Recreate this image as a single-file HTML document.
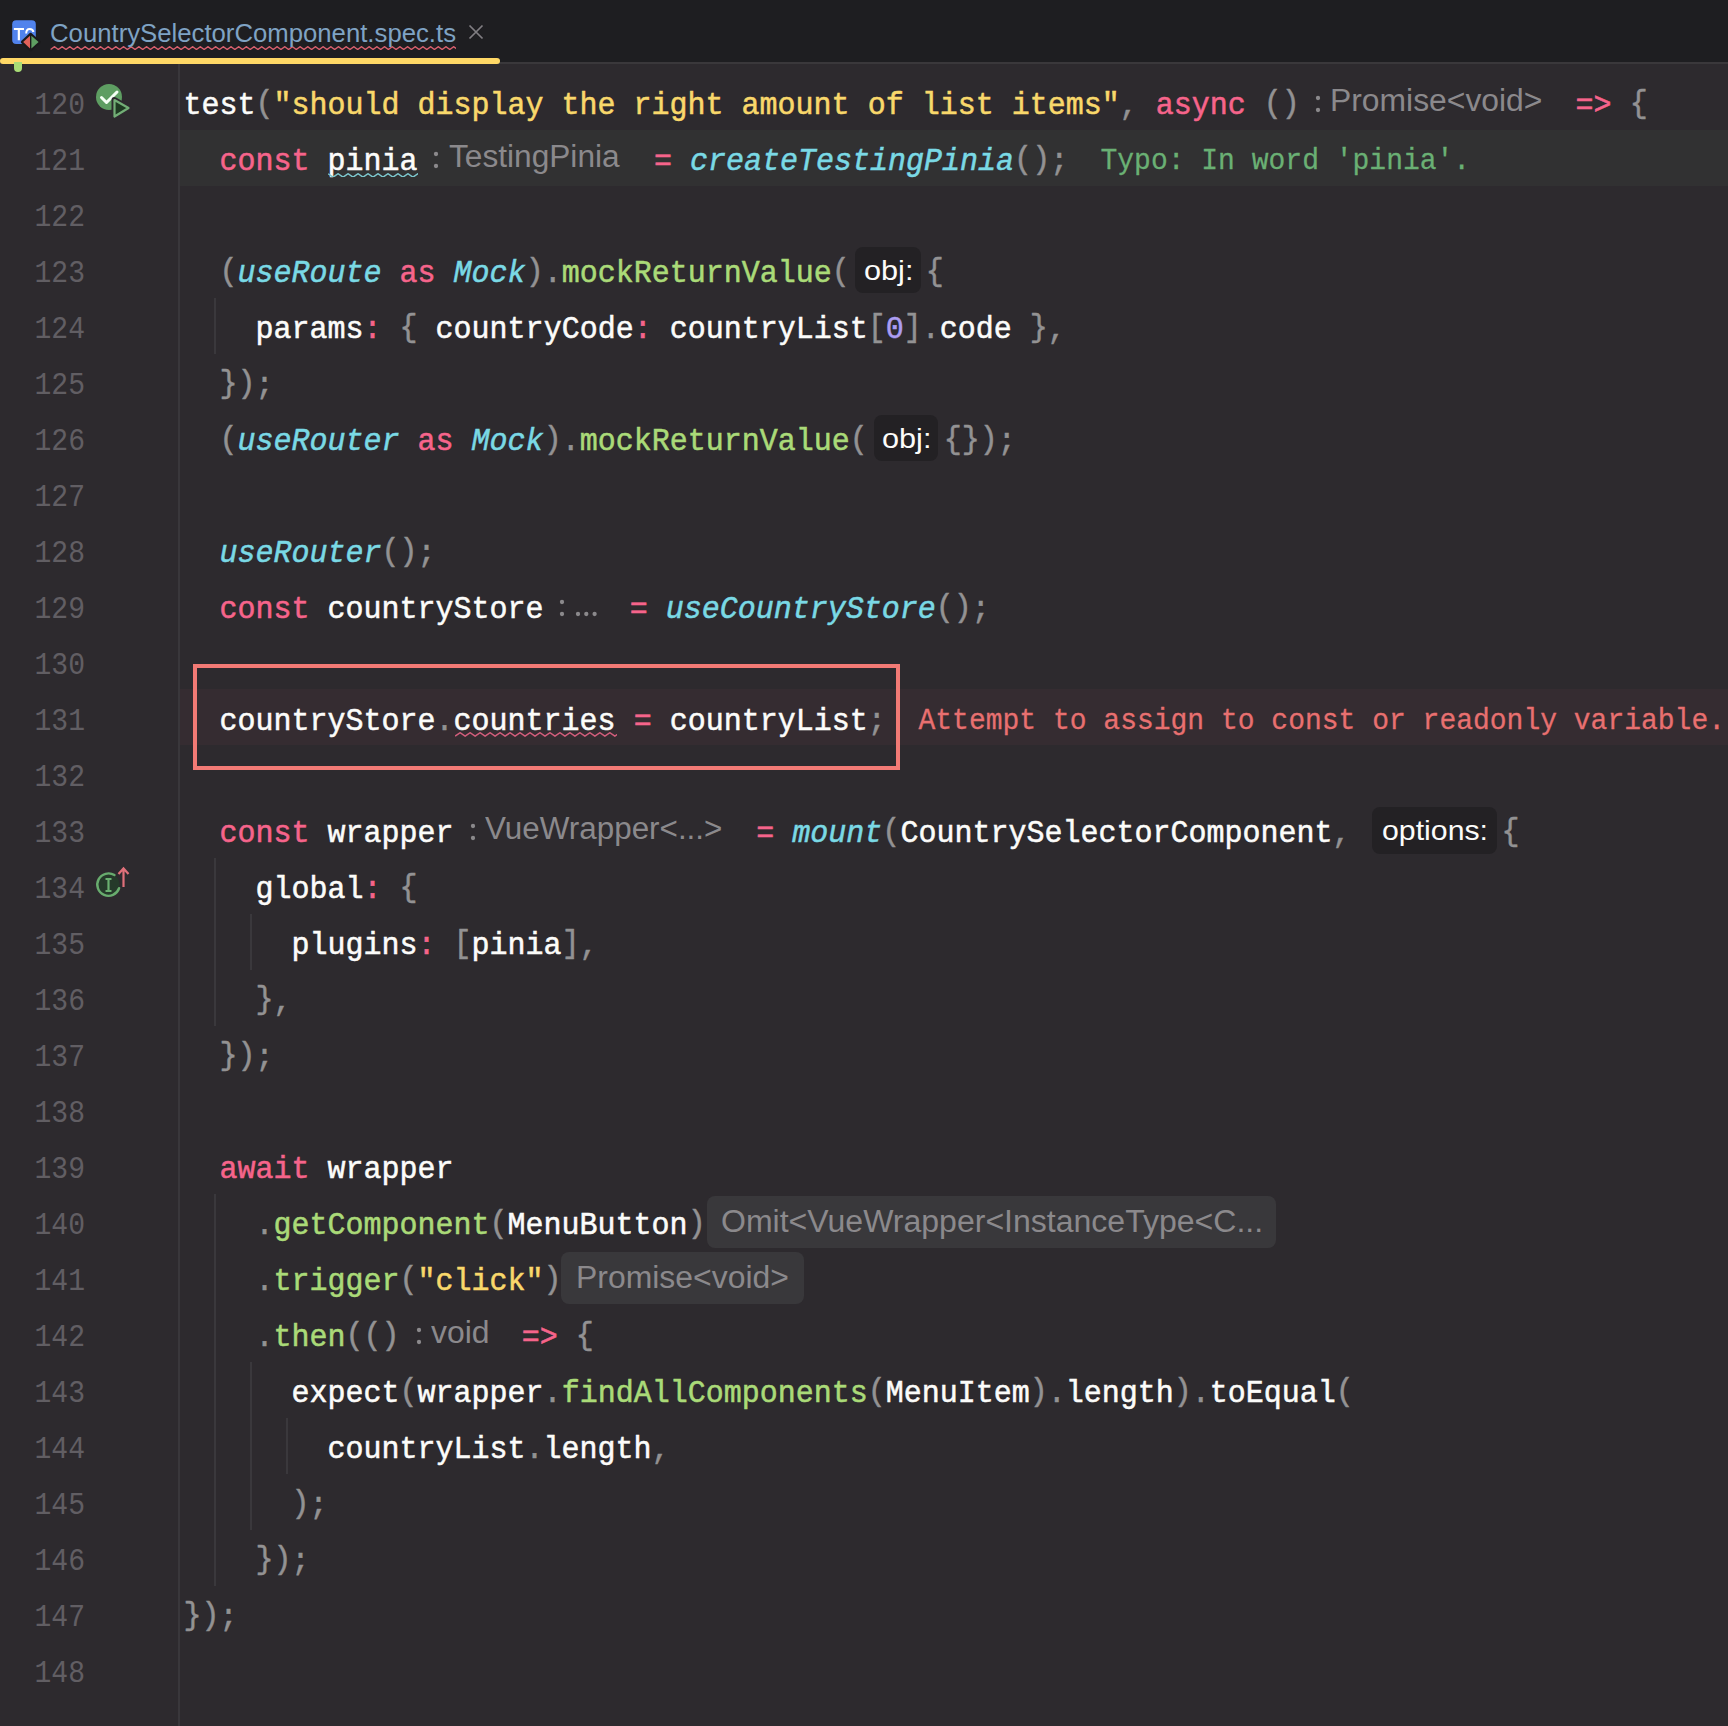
<!DOCTYPE html>
<html><head><meta charset="utf-8"><style>
*{margin:0;padding:0;box-sizing:border-box}
html,body{width:1728px;height:1726px;overflow:hidden;background:#2D2A2E}
body{position:relative;font-family:"Liberation Mono",monospace}
.a{position:absolute}
.ln{position:absolute;height:56px;line-height:56px;font-size:30px;white-space:pre;color:#FCFCFA;-webkit-text-stroke-width:0.5px;transform-origin:0 36px;transform:scaleY(1.07)}
.num{position:absolute;left:0;width:85px;text-align:right;height:56px;line-height:56px;font-size:30px;color:#615E63;white-space:pre;transform-origin:85px 36px;transform:scale(0.935,1.05)}
.w{color:#FCFCFA}.p{color:#939293}.k{color:#F6648B}.s{color:#F9D86B}.f{color:#AADA78}.c{color:#7AD9E5;font-style:italic}.n{color:#AB9DF2}
.hint{position:absolute;height:56px;line-height:56px;font-family:"Liberation Sans",sans-serif;font-size:31px;color:#8B898C;white-space:pre;transform-origin:0 0}
.hb{position:absolute;border-radius:8px}
.ig{position:absolute;width:2px;background:#3A383C}
.b{position:relative;top:-2.5px}
</style></head><body>
<div class="a" style="left:0;top:0;width:1728px;height:62px;background:#1E1E21"></div>
<div class="a" style="left:0;top:62px;width:1728px;height:2px;background:#3A383B"></div>
<div class="a" style="left:180px;top:130px;width:1548px;height:56px;background:#313132"></div>
<div class="a" style="left:180px;top:689px;width:1548px;height:56px;background:#352C31"></div>
<div class="a" style="left:178px;top:64px;width:2px;height:1662px;background:#39373B"></div>
<div class="ig" style="left:214px;top:298px;height:56px"></div>
<div class="ig" style="left:214px;top:858px;height:168px"></div>
<div class="ig" style="left:214px;top:1194px;height:392px"></div>
<div class="ig" style="left:250px;top:914px;height:56px"></div>
<div class="ig" style="left:250px;top:1362px;height:168px"></div>
<div class="ig" style="left:286px;top:1418px;height:56px"></div>
<div class="num" style="top:78px">120</div>
<div class="num" style="top:134px">121</div>
<div class="num" style="top:190px">122</div>
<div class="num" style="top:246px">123</div>
<div class="num" style="top:302px">124</div>
<div class="num" style="top:358px">125</div>
<div class="num" style="top:414px">126</div>
<div class="num" style="top:470px">127</div>
<div class="num" style="top:526px">128</div>
<div class="num" style="top:582px">129</div>
<div class="num" style="top:638px">130</div>
<div class="num" style="top:694px">131</div>
<div class="num" style="top:750px">132</div>
<div class="num" style="top:806px">133</div>
<div class="num" style="top:862px">134</div>
<div class="num" style="top:918px">135</div>
<div class="num" style="top:974px">136</div>
<div class="num" style="top:1030px">137</div>
<div class="num" style="top:1086px">138</div>
<div class="num" style="top:1142px">139</div>
<div class="num" style="top:1198px">140</div>
<div class="num" style="top:1254px">141</div>
<div class="num" style="top:1310px">142</div>
<div class="num" style="top:1366px">143</div>
<div class="num" style="top:1422px">144</div>
<div class="num" style="top:1478px">145</div>
<div class="num" style="top:1534px">146</div>
<div class="num" style="top:1590px">147</div>
<div class="num" style="top:1646px">148</div>
<div class="ln" style="left:183.5px;top:78px"><span class="w">test</span><span class="p"><span class="b">(</span></span><span class="s">"should display the right amount of list items"</span><span class="p">,</span> <span class="k">async</span> <span class="p"><span class="b">(</span><span class="b">)</span></span></div>
<svg class="a" style="left:1314.10px;top:94.00px" width="8.00" height="20.00"><circle cx="4.00" cy="4.00" r="2.15" fill="#8B898C"/><circle cx="4.00" cy="16.00" r="2.15" fill="#8B898C"/></svg><div class="hint" style="left:1329.75px;top:73px;font-size:31px;transform:scaleX(1.0272)">Promise&lt;void&gt;</div>
<div class="ln" style="left:1557.6px;top:78px"> <span class="k">=&gt;</span> <span class="p"><span class="b">{</span></span></div>
<div class="ln" style="left:183.5px;top:134px">  <span class="k">const</span> <span class="w">pinia</span></div>
<svg class="a" style="left:432.20px;top:150.00px" width="8.00" height="20.00"><circle cx="4.00" cy="4.00" r="2.15" fill="#8B898C"/><circle cx="4.00" cy="16.00" r="2.15" fill="#8B898C"/></svg><div class="hint" style="left:449.00px;top:129px;font-size:31px;transform:scaleX(1.0208)">TestingPinia</div>
<div class="ln" style="left:636px;top:134px"> <span class="k">=</span> <span class="c">createTestingPinia</span><span class="p"><span class="b">(</span><span class="b">)</span>;</span></div>
<div class="ln" style="left:1100.5px;top:134px;font-size:28px;color:#6AB074;-webkit-text-stroke-width:0.25px">Typo: In word 'pinia'.</div>
<div class="ln" style="left:183.5px;top:246px">  <span class="p"><span class="b">(</span></span><span class="c">useRoute</span> <span class="k">as</span> <span class="c">Mock</span><span class="p"><span class="b">)</span></span><span class="p">.</span><span class="f">mockReturnValue</span><span class="p"><span class="b">(</span></span></div>
<div class="hb" style="left:855px;top:247px;width:66px;height:46px;background:#232124"></div><div class="hint" style="left:863.90px;top:243px;font-size:28px;transform:scaleX(1.0952);color:#FCFCFA">obj:</div>
<div class="ln" style="left:925.7px;top:246px"><span class="p"><span class="b">{</span></span></div>
<div class="ln" style="left:183.5px;top:302px">    <span class="w">params</span><span class="k">:</span> <span class="p"><span class="b">{</span></span> <span class="w">countryCode</span><span class="k">:</span> <span class="w">countryList</span><span class="p"><span class="b">[</span></span><span class="n">0</span><span class="p"><span class="b">]</span></span><span class="p">.</span><span class="w">code</span> <span class="p"><span class="b">}</span></span><span class="p">,</span></div>
<div class="ln" style="left:183.5px;top:358px">  <span class="p"><span class="b">}</span><span class="b">)</span>;</span></div>
<div class="ln" style="left:183.5px;top:414px">  <span class="p"><span class="b">(</span></span><span class="c">useRouter</span> <span class="k">as</span> <span class="c">Mock</span><span class="p"><span class="b">)</span></span><span class="p">.</span><span class="f">mockReturnValue</span><span class="p"><span class="b">(</span></span></div>
<div class="hb" style="left:874px;top:415px;width:64px;height:46px;background:#232124"></div><div class="hint" style="left:881.90px;top:411px;font-size:28px;transform:scaleX(1.0952);color:#FCFCFA">obj:</div>
<div class="ln" style="left:943.7px;top:414px"><span class="p"><span class="b">{</span><span class="b">}</span><span class="b">)</span>;</span></div>
<div class="ln" style="left:183.5px;top:526px">  <span class="c">useRouter</span><span class="p"><span class="b">(</span><span class="b">)</span>;</span></div>
<div class="ln" style="left:183.5px;top:582px">  <span class="k">const</span> <span class="w">countryStore</span></div>
<svg class="a" style="left:558.00px;top:598.00px" width="8.00" height="20.00"><circle cx="4.00" cy="4.00" r="2.15" fill="#8B898C"/><circle cx="4.00" cy="16.00" r="2.15" fill="#8B898C"/></svg><svg class="a" style="left:574.00px;top:610.00px" width="24.60" height="8.00"><circle cx="4.00" cy="4.00" r="2.15" fill="#8B898C"/><circle cx="12.30" cy="4.00" r="2.15" fill="#8B898C"/><circle cx="20.60" cy="4.00" r="2.15" fill="#8B898C"/></svg>
<div class="ln" style="left:611.7px;top:582px"> <span class="k">=</span> <span class="c">useCountryStore</span><span class="p"><span class="b">(</span><span class="b">)</span>;</span></div>
<div class="ln" style="left:183.5px;top:694px">  <span class="w">countryStore</span><span class="p">.</span><span class="w">countries</span> <span class="k">=</span> <span class="w">countryList</span><span class="p">;</span></div>
<div class="ln" style="left:918.5px;top:694px;font-size:28px;color:#E87070;-webkit-text-stroke-width:0.25px">Attempt to assign to const or readonly variable.</div>
<div class="ln" style="left:183.5px;top:806px">  <span class="k">const</span> <span class="w">wrapper</span></div>
<svg class="a" style="left:468.50px;top:822.00px" width="8.00" height="20.00"><circle cx="4.00" cy="4.00" r="2.15" fill="#8B898C"/><circle cx="4.00" cy="16.00" r="2.15" fill="#8B898C"/></svg><div class="hint" style="left:485.00px;top:801px;font-size:31px;transform:scaleX(1.0130)">VueWrapper&lt;...&gt;</div>
<div class="ln" style="left:738.3px;top:806px"> <span class="k">=</span> <span class="c">mount</span><span class="p"><span class="b">(</span></span><span class="w">CountrySelectorComponent</span><span class="p">,</span></div>
<div class="hb" style="left:1372px;top:807px;width:125px;height:46.5px;background:#232124"></div><div class="hint" style="left:1381.92px;top:803px;font-size:28px;transform:scaleX(1.0809);color:#FCFCFA">options:</div>
<div class="ln" style="left:1501.5px;top:806px"><span class="p"><span class="b">{</span></span></div>
<div class="ln" style="left:183.5px;top:862px">    <span class="w">global</span><span class="k">:</span> <span class="p"><span class="b">{</span></span></div>
<div class="ln" style="left:183.5px;top:918px">      <span class="w">plugins</span><span class="k">:</span> <span class="p"><span class="b">[</span></span><span class="w">pinia</span><span class="p"><span class="b">]</span></span><span class="p">,</span></div>
<div class="ln" style="left:183.5px;top:974px">    <span class="p"><span class="b">}</span>,</span></div>
<div class="ln" style="left:183.5px;top:1030px">  <span class="p"><span class="b">}</span><span class="b">)</span>;</span></div>
<div class="ln" style="left:183.5px;top:1142px">  <span class="k">await</span> <span class="w">wrapper</span></div>
<div class="ln" style="left:183.5px;top:1198px">    <span class="p">.</span><span class="f">getComponent</span><span class="p"><span class="b">(</span></span><span class="w">MenuButton</span><span class="p"><span class="b">)</span></span></div>
<div class="hb" style="left:706.5px;top:1196px;width:569.5px;height:52px;background:#39383B"></div><div class="hint" style="left:720.57px;top:1194px;font-size:31px;transform:scaleX(1.0333);color:#8B898C">Omit&lt;VueWrapper&lt;InstanceType&lt;C...</div>
<div class="ln" style="left:183.5px;top:1254px">    <span class="p">.</span><span class="f">trigger</span><span class="p"><span class="b">(</span></span><span class="s">"click"</span><span class="p"><span class="b">)</span></span></div>
<div class="hb" style="left:561.3px;top:1252px;width:242.45000000000005px;height:52px;background:#39383B"></div><div class="hint" style="left:575.84px;top:1250px;font-size:31px;transform:scaleX(1.0296);color:#8B898C">Promise&lt;void&gt;</div>
<div class="ln" style="left:183.5px;top:1310px">    <span class="p">.</span><span class="f">then</span><span class="p"><span class="b">(</span><span class="b">(</span><span class="b">)</span></span></div>
<svg class="a" style="left:414.50px;top:1326.00px" width="8.00" height="20.00"><circle cx="4.00" cy="4.00" r="2.15" fill="#8B898C"/><circle cx="4.00" cy="16.00" r="2.15" fill="#8B898C"/></svg><div class="hint" style="left:431.00px;top:1305px;font-size:31px;transform:scaleX(1.0301)">void</div>
<div class="ln" style="left:503.7px;top:1310px"> <span class="k">=&gt;</span> <span class="p"><span class="b">{</span></span></div>
<div class="ln" style="left:183.5px;top:1366px">      <span class="w">expect</span><span class="p"><span class="b">(</span></span><span class="w">wrapper</span><span class="p">.</span><span class="f">findAllComponents</span><span class="p"><span class="b">(</span></span><span class="w">MenuItem</span><span class="p"><span class="b">)</span></span><span class="p">.</span><span class="w">length</span><span class="p"><span class="b">)</span></span><span class="p">.</span><span class="w">toEqual</span><span class="p"><span class="b">(</span></span></div>
<div class="ln" style="left:183.5px;top:1422px">        <span class="w">countryList</span><span class="p">.</span><span class="w">length</span><span class="p">,</span></div>
<div class="ln" style="left:183.5px;top:1478px">      <span class="p"><span class="b">)</span>;</span></div>
<div class="ln" style="left:183.5px;top:1534px">    <span class="p"><span class="b">}</span><span class="b">)</span>;</span></div>
<div class="ln" style="left:183.5px;top:1590px"><span class="p"><span class="b">}</span><span class="b">)</span>;</span></div>
<svg class="a" style="left:328px;top:172.6px" width="90" height="4.9" viewBox="0 -0.75 90 4.9"><path d="M0 0 L5.00 3.4 L10.00 0 L15.00 3.4 L20.00 0 L25.00 3.4 L30.00 0 L35.00 3.4 L40.00 0 L45.00 3.4 L50.00 0 L55.00 3.4 L60.00 0 L65.00 3.4 L70.00 0 L75.00 3.4 L80.00 0 L85.00 3.4 L90.00 0 L95.00 3.4" fill="none" stroke="#7CC6CC" stroke-width="1.5"/></svg>
<svg class="a" style="left:455px;top:732.2px" width="162" height="4.9" viewBox="0 -0.75 162 4.9"><path d="M0 3.4 L5.00 0 L10.00 3.4 L15.00 0 L20.00 3.4 L25.00 0 L30.00 3.4 L35.00 0 L40.00 3.4 L45.00 0 L50.00 3.4 L55.00 0 L60.00 3.4 L65.00 0 L70.00 3.4 L75.00 0 L80.00 3.4 L85.00 0 L90.00 3.4 L95.00 0 L100.00 3.4 L105.00 0 L110.00 3.4 L115.00 0 L120.00 3.4 L125.00 0 L130.00 3.4 L135.00 0 L140.00 3.4 L145.00 0 L150.00 3.4 L155.00 0 L160.00 3.4 L165.00 0" fill="none" stroke="#D25E7C" stroke-width="1.5"/></svg>
<svg class="a" style="left:50px;top:45.8px" width="406" height="4.199999999999999" viewBox="0 -0.7 406 4.199999999999999"><path d="M0 2.8 L3.85 0 L7.70 2.8 L11.55 0 L15.40 2.8 L19.25 0 L23.10 2.8 L26.95 0 L30.80 2.8 L34.65 0 L38.50 2.8 L42.35 0 L46.20 2.8 L50.05 0 L53.90 2.8 L57.75 0 L61.60 2.8 L65.45 0 L69.30 2.8 L73.15 0 L77.00 2.8 L80.85 0 L84.70 2.8 L88.55 0 L92.40 2.8 L96.25 0 L100.10 2.8 L103.95 0 L107.80 2.8 L111.65 0 L115.50 2.8 L119.35 0 L123.20 2.8 L127.05 0 L130.90 2.8 L134.75 0 L138.60 2.8 L142.45 0 L146.30 2.8 L150.15 0 L154.00 2.8 L157.85 0 L161.70 2.8 L165.55 0 L169.40 2.8 L173.25 0 L177.10 2.8 L180.95 0 L184.80 2.8 L188.65 0 L192.50 2.8 L196.35 0 L200.20 2.8 L204.05 0 L207.90 2.8 L211.75 0 L215.60 2.8 L219.45 0 L223.30 2.8 L227.15 0 L231.00 2.8 L234.85 0 L238.70 2.8 L242.55 0 L246.40 2.8 L250.25 0 L254.10 2.8 L257.95 0 L261.80 2.8 L265.65 0 L269.50 2.8 L273.35 0 L277.20 2.8 L281.05 0 L284.90 2.8 L288.75 0 L292.60 2.8 L296.45 0 L300.30 2.8 L304.15 0 L308.00 2.8 L311.85 0 L315.70 2.8 L319.55 0 L323.40 2.8 L327.25 0 L331.10 2.8 L334.95 0 L338.80 2.8 L342.65 0 L346.50 2.8 L350.35 0 L354.20 2.8 L358.05 0 L361.90 2.8 L365.75 0 L369.60 2.8 L373.45 0 L377.30 2.8 L381.15 0 L385.00 2.8 L388.85 0 L392.70 2.8 L396.55 0 L400.40 2.8 L404.25 0 L408.10 2.8" fill="none" stroke="#D8606E" stroke-width="1.4"/></svg>
<div class="a" style="left:192.5px;top:664px;width:707.5px;height:106px;border:4.5px solid #F27A75"></div>
<div class="a" style="left:0;top:58px;width:500px;height:6px;border-radius:3px;background:#FFD866"></div>
<div class="a" style="left:14px;top:62px;width:8px;height:10px;border-radius:0 0 4px 4px;background:#A9DC76"></div>
<div class="hint" style="left:50.01px;top:4.5px;font-size:26px;transform:scaleX(0.9892);color:#7FA3C4">CountrySelectorComponent.spec.ts</div>
<svg class="a" style="left:466px;top:22px" width="20" height="20" viewBox="0 0 20 20"><path d="M3.5 3.5 L16.5 16.5 M16.5 3.5 L3.5 16.5" stroke="#807E82" stroke-width="1.7"/></svg>
<svg class="a" style="left:10px;top:18px" width="32" height="34" viewBox="0 0 32 34">
<rect x="2.2" y="2.2" width="23.6" height="23.8" rx="4" fill="#5183EC"/>
<path d="M3.9 11 H14 M8.85 11 V22.2" stroke="#fff" stroke-width="2.2" fill="none"/>
<path d="M16.2 15.6 Q16.2 11 19.6 11 Q23 11 23.4 14" stroke="#fff" stroke-width="2" fill="none"/>
<path d="M12 24 L20.6 16 L29.6 24 L20.6 32 Z" fill="#1A1A1C" stroke="#1A1A1C" stroke-width="2.4" stroke-linejoin="round"/>
<path d="M13.2 24 L20 17.8 L20 30.4 Z" fill="#E2625A"/>
<path d="M21.4 17.8 L28.6 24 L21.4 30.4 Z" fill="#5E9F62"/>
</svg>
<svg class="a" style="left:90px;top:78px" width="46" height="46" viewBox="0 0 46 46">
<circle cx="19" cy="19" r="13" fill="#5E9E62"/>
<path d="M11.5 19.5 L16.5 24.5 L27 14" stroke="#F4FFF4" stroke-width="3" fill="none" stroke-linecap="round" stroke-linejoin="round"/>
<path d="M24.5 22 L38.5 30 L24.5 38.5 Z" fill="#2D2A2E" stroke="#2D2A2E" stroke-width="6" stroke-linejoin="round"/>
<path d="M24.5 22 L38.5 30 L24.5 38.5 Z" fill="#1E3A22" stroke="#72AE76" stroke-width="2.2" stroke-linejoin="round"/>
</svg>
<svg class="a" style="left:90px;top:862px" width="46" height="40" viewBox="0 0 46 40">
<circle cx="18.5" cy="22.6" r="11" fill="#25392A"/>
<path d="M29.09 26.25 A11.2 11.2 0 1 1 24.44 13.10" fill="none" stroke="#68AC6E" stroke-width="2.4" stroke-linecap="round"/>
<path d="M15.5 17 H21.5 M15.5 29 H21.5 M18.5 17 V29" stroke="#6AB070" stroke-width="2.2" fill="none"/>
<path d="M33.5 6 L33.5 25 M28.5 12 L33.5 6.5 L38.5 12" stroke="#E0707A" stroke-width="2.2" fill="none"/>
</svg>
</body></html>
